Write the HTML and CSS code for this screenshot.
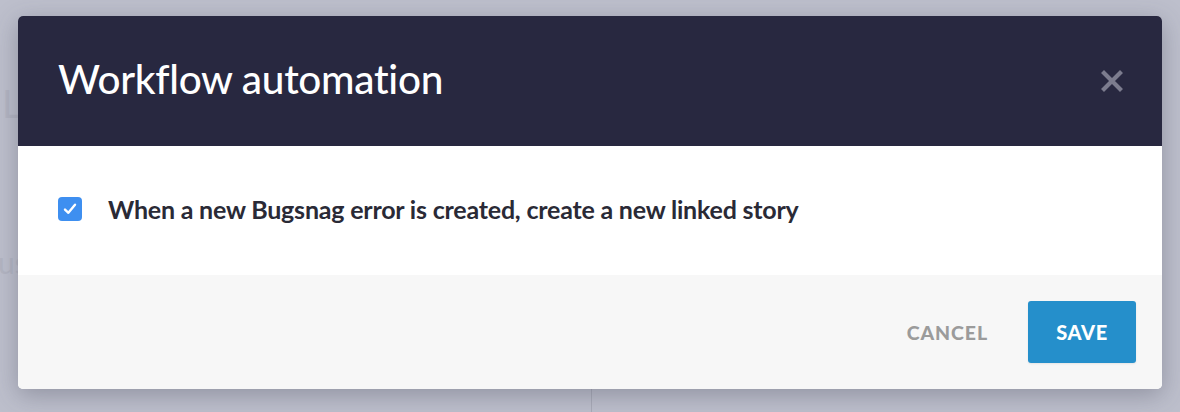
FILE: index.html
```html
<!DOCTYPE html>
<html>
<head>
<meta charset="utf-8">
<link rel="stylesheet" href="styles.css">
</head>
<body>
<div class="page">
  <div class="bg-text bg-l">L</div>
  <div class="bg-text bg-us">us</div>
  <div class="bg-divider"></div>
  <div class="overlay">
    <div class="modal">
      <div class="modal-header">
        <h1 class="title">Workflow automation</h1>
        <button class="close" aria-label="Close">
          <svg width="22" height="22" viewBox="0 0 22 22"><path d="M3 3 L19 19 M19 3 L3 19" stroke="#7c7c8e" stroke-width="4.2" stroke-linecap="square"/></svg>
        </button>
      </div>
      <div class="modal-body">
        <label class="option">
          <span class="checkbox">
            <svg width="18" height="18" viewBox="0 0 18 18"><path d="M4 9.6 L7.4 12.8 L14 4.8" fill="none" stroke="#fff" stroke-width="2.4" stroke-linecap="round" stroke-linejoin="round"/></svg>
          </span>
          <span class="option-text">When a new Bugsnag error is created, create a new linked story</span>
        </label>
      </div>
      <div class="modal-footer">
        <button class="btn-cancel">CANCEL</button>
        <button class="btn-save">SAVE</button>
      </div>
    </div>
  </div>
</div>
</body>
</html>
```
FILE: styles.css
```css
html, body {
  margin: 0;
  padding: 0;
}
body {
  width: 1180px;
  height: 412px;
  overflow: hidden;
  background: #bdbfcc;
  font-family: "Lato", "Noto Sans", sans-serif;
}
.page {
  position: relative;
  width: 1180px;
  height: 412px;
}
.bg-text {
  position: absolute;
  color: #b3b5c2;
  font-size: 38px;
}
.bg-l { left: 2px; top: 80px; }
.bg-us { left: -2px; top: 244px; font-size: 30px; }
.bg-divider {
  position: absolute;
  left: 591px;
  top: 380px;
  width: 1px;
  height: 40px;
  background: #a9abb8;
}
.overlay {
  position: absolute;
  inset: 0;
  padding: 16px 18px 0 18px;
}
.modal {
  display: flex;
  flex-direction: column;
  height: 373px;
  border-radius: 5px;
  overflow: hidden;
  background: #fff;
  box-shadow: 0 6px 24px rgba(60, 62, 80, 0.35);
}
.modal-header {
  height: 130px;
  flex: none;
  background: #282840;
  display: flex;
  align-items: center;
  justify-content: space-between;
  padding: 0 39px 0 40px;
  box-sizing: border-box;
}
.title {
  margin: 0;
  color: #fff;
  font-weight: 500;
  font-size: 40.5px;
  letter-spacing: -0.3px;
  padding-bottom: 6px;
}
.close {
  background: none;
  border: 0;
  padding: 0;
  width: 22px;
  height: 22px;
  display: flex;
}
.modal-body {
  height: 129px;
  flex: none;
  display: flex;
  align-items: center;
  padding: 0 40px 3px 40px;
  box-sizing: border-box;
}
.option {
  display: flex;
  align-items: center;
  gap: 26px;
}
.checkbox {
  width: 24px;
  height: 24px;
  border-radius: 4px;
  background: #3e8ff0;
  display: flex;
  align-items: center;
  justify-content: center;
}
.option-text {
  color: #2a2a36;
  font-weight: 700;
  font-size: 25px;
  letter-spacing: -0.2px;
}
.modal-footer {
  flex: 1;
  background: #f7f7f7;
  display: flex;
  align-items: center;
  justify-content: flex-end;
  padding: 0 26px 0 0;
  gap: 40px;
}
.btn-cancel {
  background: none;
  border: 0;
  padding: 0;
  color: #9b9b9b;
  font-family: inherit;
  font-weight: 900;
  font-size: 19.5px;
  letter-spacing: 0.9px;
}
.btn-save {
  width: 108px;
  height: 62px;
  border: 0;
  border-radius: 3px;
  background: #258fcb;
  color: #fff;
  font-family: inherit;
  font-weight: 900;
  font-size: 20px;
  letter-spacing: 0.6px;
  box-shadow: 0 1px 2px rgba(0,0,0,0.08);
}
```
